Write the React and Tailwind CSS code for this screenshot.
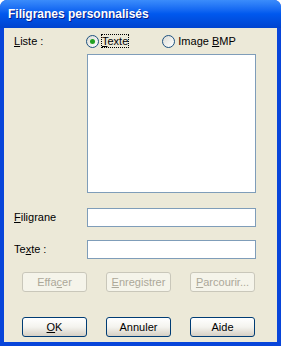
import React from 'react';

// XP-style "Filigranes personnalisés" dialog.
const font = { fontFamily: '"Liberation Sans", Arial, sans-serif' };

function Radio({ checked, children, focused }) {
  return (
    <label className="flex items-center gap-[3px]">
      <span className="flex h-[13px] w-[13px] items-center justify-center rounded-full border border-[#1c5180] bg-gradient-to-br from-[#dcdcd5] to-white">
        {checked && <span className="h-[5px] w-[5px] rounded-full bg-[#21a121]" />}
      </span>
      <span className={focused ? 'outline outline-1 outline-dotted outline-black leading-[12px]' : 'leading-[12px]'}>
        {children}
      </span>
    </label>
  );
}

function Button({ children, disabled, className = '' }) {
  return (
    <button
      className={`h-[20px] w-[65px] rounded-[3px] border text-[11px] ${
        disabled
          ? 'border-[#c9c7ba] bg-[#f5f4ea] text-[#aca899]'
          : 'border-[#003c74] bg-gradient-to-b from-white via-[#f4f3ee] to-[#d6d0c5] text-black'
      } ${className}`}
    >
      {children}
    </button>
  );
}

export default function App() {
  return (
    <div style={font} className="h-[346px] w-[281px] overflow-hidden rounded-t-[7px] bg-[#0845da] text-[11px] text-black">
      <div className="flex h-[28px] items-center bg-gradient-to-b from-[#3b8cfb] via-[#0058ee] to-[#0043cf] pl-[8px]">
        <span className="text-[12px] font-bold text-white [text-shadow:1px_1px_0_#0a1e8c]">
          Filigranes personnalisés
        </span>
      </div>
      <div className="mx-[4px] h-[314px] bg-[#ece9d8] pt-[6px]">
        <div className="flex h-[14px] items-center">
          <span className="ml-[10px] w-[72px]">
            <u>L</u>iste :
          </span>
          <Radio checked focused>
            <u>T</u>exte
          </Radio>
          <span className="ml-[34px]">
            <Radio>
              Image <u>B</u>MP
            </Radio>
          </span>
        </div>
        <div className="ml-[83px] mt-[6px] h-[139px] w-[169px] border border-[#7f9db9] bg-white" />
        <div className="mt-[15px] flex h-[19px] items-center">
          <span className="ml-[10px] w-[73px]">
            <u>F</u>iligrane
          </span>
          <div className="h-[19px] w-[169px] border border-[#7f9db9] bg-white" />
        </div>
        <div className="mt-[13px] flex h-[19px] items-center">
          <span className="ml-[10px] w-[73px]">
            Te<u>x</u>te :
          </span>
          <div className="h-[19px] w-[169px] border border-[#7f9db9] bg-white" />
        </div>
        <div className="ml-[18px] mt-[13px] flex gap-[18px]">
          <Button disabled>
            Effa<u>c</u>er
          </Button>
          <Button disabled className="ml-[1px]">
            <u>E</u>nregistrer
          </Button>
          <Button disabled className="ml-[1px]">
            <u>P</u>arcourir...
          </Button>
        </div>
        <div className="ml-[18px] mt-[25px] flex gap-[18px]">
          <Button>
            <u>O</u>K
          </Button>
          <Button className="ml-[1px]">Annuler</Button>
          <Button className="ml-[1px]">Aide</Button>
        </div>
      </div>
    </div>
  );
}
